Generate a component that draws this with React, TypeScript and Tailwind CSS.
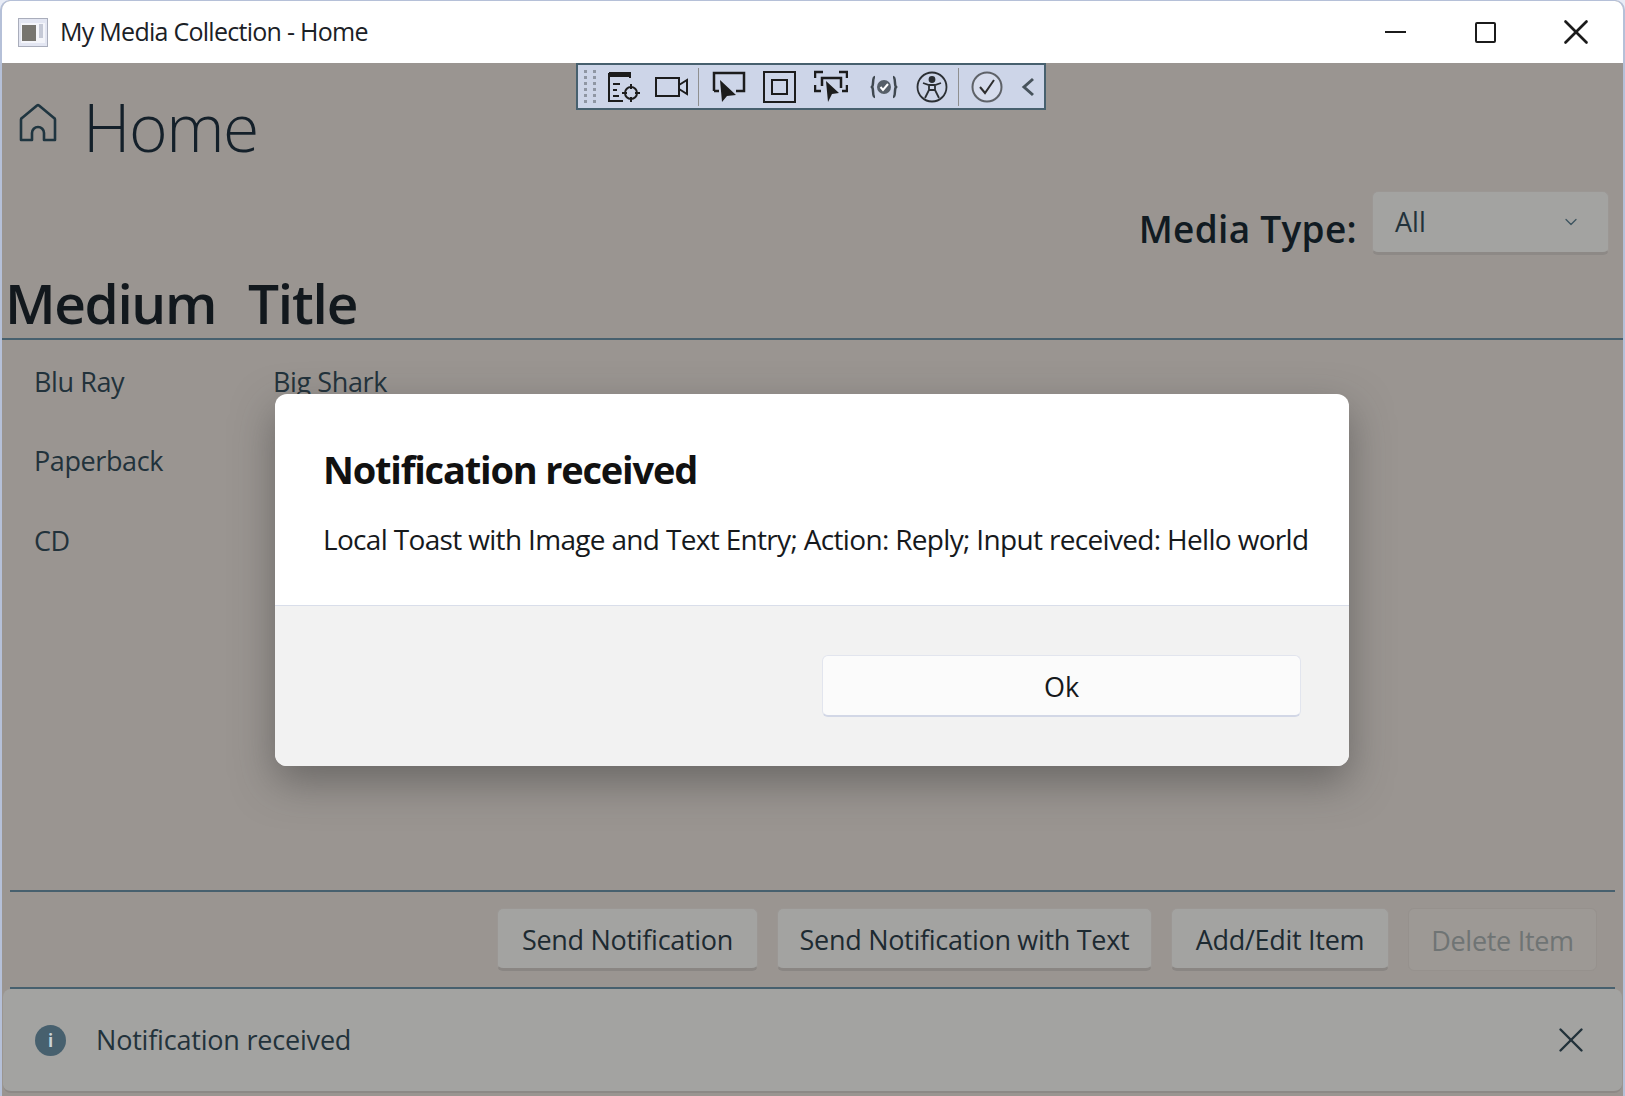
import { ChevronDown, X } from "lucide-react";

const appFont = "font-['Open_Sans',sans-serif]";

function ToolbarIcons() {
  return (
    <div className="absolute top-[63px] left-[576px] w-[470px] h-[47px] bg-[#cdd5e8] border-2 border-[#47606e] flex items-center text-[#1c1c1c]">
      <div className="ml-[6px] w-[12px] h-[33px] border-x-[3px] border-dotted border-[#8f96a3]" />
      <svg className="ml-[11px]" width="35" height="34" viewBox="0 0 35 34" fill="none" stroke="currentColor" strokeWidth="2">
        <path d="M2 3h21v5M2 3v28h14" />
        <path d="M2 5h21" strokeWidth="4" />
        <path d="M6 14h7M6 20h4M6 26h6" />
        <circle cx="24" cy="23" r="6" />
        <path d="M24 14v5M24 27v5M15 23h5M28 23h5" />
      </svg>
      <svg className="ml-[13px]" width="34" height="24" viewBox="0 0 34 24" fill="none" stroke="currentColor" strokeWidth="2">
        <rect x="1" y="3" width="23" height="18" />
        <path d="M24 10l8-5v14l-8-5" />
      </svg>
      <div className="ml-[9px] w-px h-[38px] bg-[#8f8f8f]" />
      <svg className="ml-[13px]" width="34" height="32" viewBox="0 0 34 32" fill="none" stroke="currentColor" strokeWidth="2.5">
        <path d="M2 20V2h30v18h-8M2 20h5" />
        <path d="M8 9l16 15-9 1-5 6z" fill="currentColor" stroke="none" />
      </svg>
      <svg className="ml-[17px]" width="33" height="32" viewBox="0 0 33 32" fill="none" stroke="currentColor" strokeWidth="2">
        <rect x="1" y="1" width="31" height="30" />
        <rect x="9" y="9" width="15" height="14" />
      </svg>
      <svg className="ml-[18px]" width="34" height="33" viewBox="0 0 34 33" fill="none" stroke="currentColor" strokeWidth="2.5">
        <path d="M1 8V2h8M25 2h8v6M1 15v6h6M33 15v6h-5M8 16V8h19v10" />
        <path d="M12 11l13 12-7 1-4 8z" fill="currentColor" stroke="none" />
      </svg>
      <svg className="ml-[22px]" width="28" height="24" viewBox="0 0 28 24" fill="none" stroke="#3f4850" strokeWidth="2.5">
        <path d="M5 2c-3 0-1 8-3 10 2 2 0 10 3 10M23 2c3 0 1 8 3 10-2 2 0 10-3 10" />
        <circle cx="14" cy="12" r="7" fill="#565f68" stroke="none" />
        <path d="M10.5 12l2.5 3 5-6" stroke="#ffffff" strokeWidth="2" />
      </svg>
      <svg className="ml-[18px]" width="32" height="32" viewBox="0 0 32 32" fill="none" stroke="#2b2f33" strokeWidth="1.8">
        <circle cx="16" cy="16" r="14.5" />
        <circle cx="16" cy="8.5" r="2.5" fill="#2b2f33" />
        <path d="M7 12l6 2h6l6-2M13 14v5l-4 8M19 14v5l4 8M13 19h6" />
      </svg>
      <div className="ml-[10px] w-px h-[38px] bg-[#8f8f8f]" />
      <svg className="ml-[12px]" width="32" height="32" viewBox="0 0 32 32" fill="none" stroke="#2e2e2e" strokeWidth="2">
        <circle cx="16" cy="16" r="14.5" fill="#d7dded" stroke="#5e6268" />
        <path d="M9 16l5 6 9-13" />
      </svg>
      <svg className="ml-[18px]" width="14" height="20" viewBox="0 0 14 20" fill="none" stroke="#47535c" strokeWidth="3">
        <path d="M12 2L3 10l9 8" />
      </svg>
    </div>
  );
}

function CommandButton({ label, width, disabled }: { label: string; width: string; disabled?: boolean }) {
  return (
    <button
      className={`h-[63px] pt-[3px] ${width} rounded-[6px] text-[27px] tracking-[-0.3px] border ${
        disabled
          ? "bg-[#9d9995] border-[#96918d] text-[#6f7474]"
          : "bg-[#a3a3a1] border-[#9b9794] border-b-[3px] border-b-[#8a8683] text-[#1d2a31]"
      }`}
    >
      {label}
    </button>
  );
}

export default function App() {
  return (
    <div className={`relative w-[1625px] h-[1096px] overflow-hidden bg-[#e8ecf6] ${appFont}`}>
      <div className="w-full h-full flex flex-col rounded-t-[10px] border-x-2 border-t border-[#b5c0d8] overflow-hidden bg-[#9a9591]">
        {/* title bar */}
        <div className="h-[62px] bg-white flex items-center shrink-0">
          <svg className="ml-[16px]" width="30" height="29" viewBox="0 0 30 29">
            <rect x="0.5" y="0.5" width="29" height="28" fill="#e3e6f2" stroke="#a9adbb" />
            <rect x="3" y="5" width="24" height="20" fill="#f4f5fa" />
            <rect x="4" y="7" width="14" height="16" fill="#77756f" />
            <rect x="21" y="6" width="4" height="14" fill="#c5c9d6" />
          </svg>
          <span className="ml-[12px] text-[25px] tracking-[-0.73px] text-[#1b2126]">My Media Collection - Home</span>
          <div className="ml-auto flex items-center">
            <div className="w-[21px] h-[2px] bg-[#1b1b1b] mr-[69px]" />
            <div className="w-[21px] h-[21px] border-[2.5px] border-[#1b1b1b] rounded-[2px] mr-[59px]" />
            <X className="w-[42px] h-[42px] mr-[26px] text-[#1b1b1b]" strokeWidth={1.5} absoluteStrokeWidth />
          </div>
        </div>

        {/* home header */}
        <div className="h-[128px] shrink-0 flex items-start pl-[16px] pt-[40px] text-[#14202a]">
          <svg width="40" height="40" viewBox="0 0 40 40" fill="none" stroke="#1f3540" strokeWidth="2.6">
            <path d="M3 37V16.5q0-1 1-1.5L19 2.5q1-.7 2 0L36 15q1 .5 1 1.5V37H26V30a6 6 0 0 0-12 0V37z" strokeLinejoin="round" />
          </svg>
          <span className="ml-[25px] -mt-[24px] text-[66px] font-light tracking-[-1.5px] leading-[94px]">Home</span>
        </div>

        {/* media type filter */}
        <div className="h-[79px] shrink-0 flex items-start justify-end pr-[14px] text-[#111b22]">
          <span className="mt-[13px] text-[37px] font-semibold tracking-[0.3px] leading-[50px]">Media Type:</span>
          <div className="ml-[15px] w-[237px] h-[64px] rounded-[6px] bg-[#a3a3a1] border border-[#9b9794] border-b-[3px] border-b-[#8d8986] flex items-center justify-between pl-[22px] pr-[27px]">
            <span className="text-[27px] text-[#22323b]">All</span>
            <ChevronDown className="w-[20px] h-[20px] text-[#3d545f]" strokeWidth={1.5} />
          </div>
        </div>

        {/* table */}
        <div className="h-[70px] shrink-0 flex items-end border-b-2 border-[#47606e] text-[#12181d]">
          <div className="pl-[3px] w-[246px] text-[55px] font-semibold tracking-[-1.4px] leading-[78px] mb-[-4px]">Medium</div>
          <div className="text-[55px] font-semibold tracking-[-1.2px] leading-[78px] mb-[-4px]">Title</div>
        </div>
        <div className="flex-1 pt-[2px] text-[27px] text-[#22323b] tracking-[-0.4px]">
          {[
            ["Blu Ray", "Big Shark"],
            ["Paperback", ""],
            ["CD", ""],
          ].map(([medium, title]) => (
            <div key={medium} className="h-[79.6px] flex items-center pl-[32px]">
              <span className="w-[239px]">{medium}</span>
              <span>{title}</span>
            </div>
          ))}
        </div>

        {/* command bar */}
        <div className="mx-[8px] h-[99px] shrink-0 border-y-2 border-[#47606e] flex items-center justify-end gap-[19px] pr-[18px]">
          <CommandButton label="Send Notification" width="w-[261px]" />
          <CommandButton label="Send Notification with Text" width="w-[375px]" />
          <CommandButton label="Add/Edit Item" width="w-[218px]" />
          <CommandButton label="Delete Item" width="w-[189px]" disabled />
        </div>

        {/* info bar */}
        <div className="mx-[1px] mb-[3px] h-[104px] shrink-0 rounded-[8px] bg-[#a3a3a1] border-b-2 border-[#8d8986] flex items-center pl-[32px] pr-[30px]">
          <div className="w-[31px] h-[31px] rounded-full bg-[#47606e] flex items-center justify-center text-[#c9d3d8] text-[17px] font-bold leading-none">i</div>
          <span className="ml-[30px] text-[27px] tracking-[-0.2px] text-[#22323b]">Notification received</span>
          <X className="ml-auto w-[42px] h-[42px] text-[#22323b]" strokeWidth={1.4} absoluteStrokeWidth />
        </div>
      </div>

      <ToolbarIcons />

      {/* dialog */}
      <div className="absolute left-[275px] top-[394px] w-[1074px] h-[372px] rounded-[12px] overflow-hidden bg-white shadow-[0_16px_40px_rgba(60,60,60,0.5)] flex flex-col">
        <div className="h-[212px] shrink-0 border-b border-[#d9deea] px-[48px] pt-[50px] text-[#111]">
          <div className="text-[38px] font-bold tracking-[-1.2px] leading-[50px]">Notification received</div>
          <div className="mt-[25px] text-[28px] tracking-[-0.67px] leading-[40px] text-[#16191c] whitespace-nowrap">
            Local Toast with Image and Text Entry; Action: Reply; Input received: Hello world
          </div>
        </div>
        <div className="flex-1 bg-[#f2f2f2] flex items-start justify-end pr-[48px] pt-[49px]">
          <button className="w-[479px] h-[62px] pt-[3px] rounded-[6px] bg-[#fbfbfb] border border-[#e2e5ee] border-b-2 border-b-[#d2d7e6] text-[27px] text-[#16191c]">
            Ok
          </button>
        </div>
      </div>
    </div>
  );
}
